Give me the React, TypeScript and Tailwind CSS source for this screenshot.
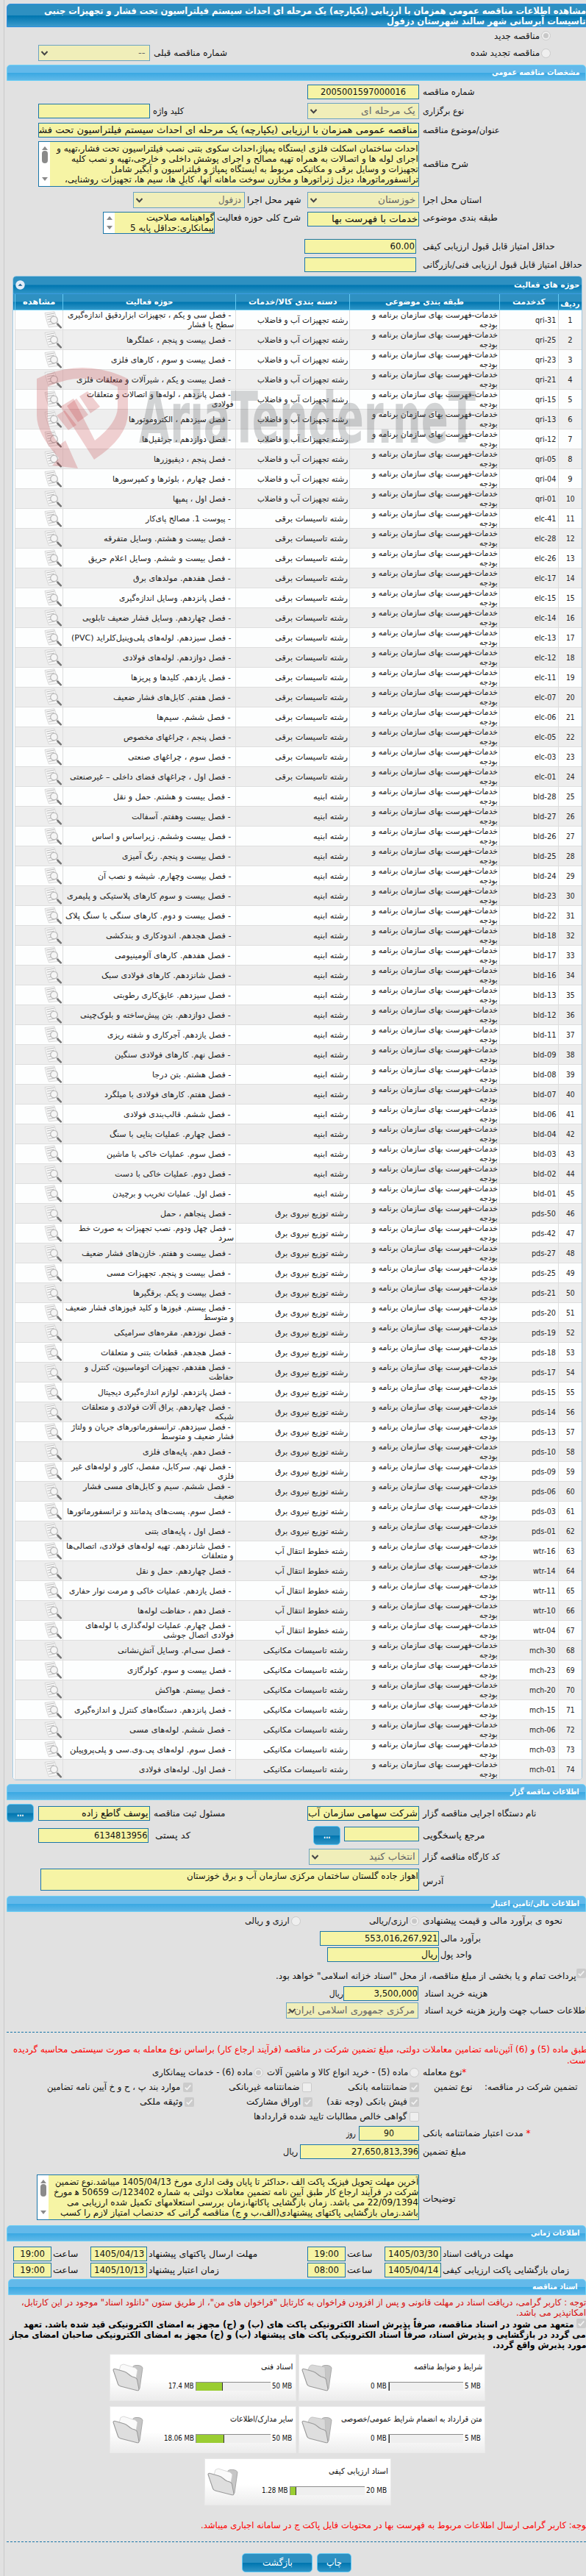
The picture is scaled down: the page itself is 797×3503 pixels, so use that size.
import React, { useLayoutEffect, useRef, useState } from "react";

/* One line of text, condensed or widened to fill its box. */
function T({ c = "", width, ltr, children }: { c?: string; width?: number; ltr?: boolean; children: React.ReactNode }) {
  const box = useRef<HTMLDivElement>(null);
  const ink = useRef<HTMLSpanElement>(null);
  const [k, setK] = useState(1);
  useLayoutEffect(() => {
    if (box.current && ink.current) setK(box.current.clientWidth / ink.current.offsetWidth);
  }, [children, width]);
  return (
    <div ref={box} dir={ltr ? "ltr" : "rtl"} className={`shrink-0 whitespace-nowrap ${c}`} style={width ? { width } : undefined}>
      <span ref={ink} className={`inline-block whitespace-pre ${ltr ? "origin-left" : "origin-right"}`} style={{ transform: `scaleX(${k})` }}>
        {children}
      </span>
    </div>
  );
}

function Section({ w, m = "ml-[9px] pr-[8px]", children }: { w: string; m?: string; children: React.ReactNode }) {
  return (
    <div className={`flex h-[22px] shrink-0 items-center justify-end rounded-t-[5px] border border-[#6fd0f5] bg-[linear-gradient(#63b9ea_0%,#63b9ea_48%,#3aa9e3_52%,#60b8e8_100%)] text-[11px] font-bold text-white ${m}`}>
      <T c={w}>{children}</T>
    </div>
  );
}

/* Horizontal strip of the form; children are laid out left to right. */
function Row({ c, children }: { c: string; children: React.ReactNode }) {
  return <div className={`flex shrink-0 items-center ${c}`}>{children}</div>;
}

function Input({ c, w, m = "mr-[1px]", children }: { c: string; w?: string; m?: string; children?: React.ReactNode }) {
  return (
    <div className={`flex h-[20px] shrink-0 items-center justify-end overflow-hidden border border-[#1b76a9] bg-[#f6f4a5] text-[13px] ${c}`}>
      {children && <T c={`${w} ${m}`}>{children}</T>}
    </div>
  );
}

function Select({ c, w, children }: { c: string; w: string; children: React.ReactNode }) {
  return (
    <div className={`relative flex h-[22px] shrink-0 items-center justify-end overflow-hidden border border-[#6ba3c3] bg-[#f0eeb9] pr-[4px] text-[13px] text-[#666] ${c}`}>
      <svg className="absolute left-[2px] top-[6px]" width="11" height="9" viewBox="0 0 11 9">
        <path d="M1.5 2 5.5 6.2 9.5 2" fill="none" stroke="#444" strokeWidth="2" />
      </svg>
      <T c={w}>{children}</T>
    </div>
  );
}

function Radio({ on, c = "" }: { on?: boolean; c?: string }) {
  return (
    <span className={`flex size-[13px] shrink-0 items-center justify-center rounded-full border border-[#cbcbcb] bg-[#efefef] ${c}`}>
      {on && <span className="size-[7px] rounded-full bg-[#c8c8c8]" />}
    </span>
  );
}

function Check({ on, c = "" }: { on?: boolean; c?: string }) {
  return on ? (
    <svg className={`shrink-0 ${c}`} width="13" height="13" viewBox="0 0 13 13">
      <rect width="13" height="13" rx="2" fill="#cbcbcb" />
      <path d="M2.8 6.8 5.3 9.3 10.3 3.5" fill="none" stroke="#f3f3f3" strokeWidth="1.8" />
    </svg>
  ) : (
    <span className={`size-[13px] shrink-0 rounded-[2px] border border-[#cbcbcb] bg-[#efefef] ${c}`} />
  );
}

function Btn({ c, w, children }: { c: string; w: string; children: React.ReactNode }) {
  return (
    <div className={`flex shrink-0 items-center justify-center rounded-[5px] border border-[#5fc8f5] bg-[linear-gradient(#2e90c1_0%,#2e90c1_48%,#0076b0_52%,#3095c6_100%)] text-white ${c}`}>
      <T c={w}>{children}</T>
    </div>
  );
}

function Scroll({ h }: { h?: boolean }) {
  return (
    <div className={`flex w-[15px] shrink-0 flex-col items-center justify-between bg-white ${h ? "py-[5px]" : "pt-[6px] pb-[7px]"}`}>
      <span className="border-x-[4.5px] border-b-[5px] border-x-transparent border-b-[#8a8a8a]" />
      {!h && <span className="-mt-[19px] h-[17px] w-[8px] rounded-full bg-[#8a8a8a]" />}
      <span className="border-x-[4.5px] border-t-[5px] border-x-transparent border-t-[#8a8a8a]" />
    </div>
  );
}

function Area({ c, h, children }: { c: string; h?: boolean; children: React.ReactNode }) {
  return (
    <div className={`flex shrink-0 overflow-hidden border border-[#1b76a9] bg-[#f6f4a5] text-[12px] leading-[14px] ${c}`}>
      <Scroll h={h} />
      <div className={`flex flex-1 flex-col items-end ${h ? "" : "pt-[2px]"}`}>{children}</div>
    </div>
  );
}

function DocIcon() {
  return (
    <svg width="24" height="24" viewBox="0 0 24 24" className="shrink-0">
      <path d="M1 2.5 14 .8l6.5 19.5-14 1.600C3.500 15 2.600 9 1 2.500Z" fill="#f7f7f7" stroke="#cfcfcf" strokeWidth=".8" />
      <path d="m3 5 11-2M4 8l10-2M4.500 11.500l5-1M5.500 15l4-.8M6.500 18.500l8-1.500" stroke="#bdbdbd" strokeWidth="1.200" fill="none" />
      <circle cx="13.500" cy="12" r="4.800" fill="#f4f4f4" fillOpacity=".85" stroke="#b5b5b5" strokeWidth="1.100" />
      <path d="m17 16.300 1.500 1.500" stroke="#999" strokeWidth="1.500" />
      <path d="m18.500 18 4.300 4.300" stroke="#747474" strokeWidth="2.500" strokeLinecap="round" />
    </svg>
  );
}

function Folder({ full }: { full?: boolean }) {
  return (
    <svg width="42" height="38" viewBox="0 0 42 38" className="shrink-0">
      <path d="M27 6c1-3 3-3.500 5-3.500 4-.3 8 .5 9 3.500l-4 28-2 2.500L26 20Z" fill="#c6c6c6" stroke="#9a9a9a" strokeWidth=".8" />
      {full && <path d="M9 10 11 2.500l4-1.500 16 5 3 3-3 17Z" fill="#fafafa" stroke="#d0d0d0" strokeWidth=".8" />}
      {!full && <path d="M9 10c1-6 3-8 6-8l17 3 1 20Z" fill="#d9d9d9" stroke="#bdbdbd" strokeWidth=".8" />}
      <path d="M1 9c0-1.500 1.500-2 3-1.500l12 3.500c5 1.500 6 5 11 7 4 1 6 2 6.500 4L36 35c-.2 1.800-1 2-2.500 1.700L11 31c-2-.5-3-1.500-3.500-3Z" fill="#dedede" stroke="#9a9a9a" strokeWidth="1.100" />
    </svg>
  );
}

function Card({ c = "", title, tw, total, totW, used, usedW, pct }: { c?: string; title: string; tw: string; total: string; totW: string; used: string; usedW: string; pct: number }) {
  return (
    <div className={`flex h-[64px] w-[254px] shrink-0 border border-[#e9e9e9] bg-[linear-gradient(#fff_55%,#ececec)] text-[11px] leading-[14px] ${c}`}>
      <div className="pt-[12px] pl-[3px]"><Folder full={pct > 0} /></div>
      <div className="flex flex-1 flex-col items-end">
        <T c={`mt-[10px] mr-[3px] ${tw}`}>{title}</T>
        <div className="mt-[12px] mr-[5px] flex items-center" dir="ltr">
          <T ltr c={usedW}>{used}</T>
          <div className="mx-[2px] flex h-[12px] w-[102px] border-t border-l border-[#8e8e8e] bg-[#efefef]">
            <div className="border-r border-[#333] bg-[#9acd32]" style={{ width: `${pct}%` }} />
          </div>
          <T ltr c={totW}>{total}</T>
        </div>
      </div>
    </div>
  );
}

const GROUPS: Record<string, [string, number]> = {
  qri: ["رشته تجهیزات آب و فاضلاب", 123],
  elc: ["رشته تاسیسات برقی", 99],
  bld: ["رشته ابنیه", 47],
  pds: ["رشته توزیع نیروی برق", 99],
  wtr: ["رشته خطوط انتقال آب", 99],
  mch: ["رشته تاسیسات مکانیکی", 115],
};

const ROWS: [string, string, number, string?, number?][] = [
  ["qri-31", "- فصل سی و یکم ، تجهیزات ابزاردقیق اندازه‌گیری", 222, "سطح یا فشار", 62],
  ["qri-25", "- فصل بیست و پنجم ، عملگرها", 142],
  ["qri-23", "- فصل بیست و سوم ، کارهای فلزی", 163],
  ["qri-21", "- فصل بیست و یکم ، شیرآلات و متعلقات فلزی", 210],
  ["qri-15", "- فصل پانزدهم ، لوله‌ها و اتصالات و متعلقات", 196, "فولادی", 30],
  ["qri-13", "- فصل سیزدهم ، الکتروموتورها", 139],
  ["qri-12", "- فصل دوازدهم ، جرثقیل‌ها", 121],
  ["qri-05", "- فصل پنجم ، دیفیوزرها", 105],
  ["qri-04", "- فصل چهارم ، بلوئرها و کمپرسورها", 161],
  ["qri-01", "- فصل اول ، پمپها", 79],
  ["elc-41", "- پیوست 1. مصالح پای‌کار", 116],
  ["elc-28", "- فصل بیست و هشتم. وسایل متفرقه", 173],
  ["elc-26", "- فصل بیست و ششم. وسایل اعلام حریق", 194],
  ["elc-17", "- فصل هفدهم. مولدهای برق", 133],
  ["elc-15", "- فصل پانزدهم. وسایل اندازه‌گیری", 152],
  ["elc-14", "- فصل چهاردهم. وسایل فشار ضعیف تابلویی", 202],
  ["elc-13", "- فصل سیزدهم. لوله‌های پلی‌وینیل‌کلراید (PVC)", 217],
  ["elc-12", "- فصل دوازدهم. لوله‌های فولادی", 147],
  ["elc-11", "- فصل یازدهم. کلیدها و پریزها", 136],
  ["elc-07", "- فصل هفتم. کابل‌های فشار ضعیف", 160],
  ["elc-06", "- فصل ششم. سیم‌ها", 101],
  ["elc-05", "- فصل پنجم ، چراغهای مخصوص", 146],
  ["elc-03", "- فصل سوم ، چراغهای صنعتی", 140],
  ["elc-01", "- فصل اول ، چراغهای فضای داخلی – غیرصنعتی", 219],
  ["bld-28", "- فصل بیست و هشتم. حمل و نقل", 160],
  ["bld-27", "- فصل بیست وهفتم. آسفالت", 135],
  ["bld-26", "- فصل بیست وششم. زیراساس و اساس", 189],
  ["bld-25", "- فصل بیست و پنجم. رنگ آمیزی", 148],
  ["bld-24", "- فصل بیست وچهارم. شیشه و نصب آن", 181],
  ["bld-23", "- فصل بیست و سوم کارهای پلاستیکی و پلیمری", 223],
  ["bld-22", "- فصل بیست و دوم. کارهای سنگی با سنگ پلاک", 225],
  ["bld-18", "- فصل هجدهم. اندودکاری و بندکشی", 170],
  ["bld-17", "- فصل هفدهم. کارهای آلومینیومی", 158],
  ["bld-16", "- فصل شانزدهم. کارهای فولادی سبک", 176],
  ["bld-13", "- فصل سیزدهم. عایق‌کاری رطوبتی", 160],
  ["bld-12", "- فصل دوازدهم. بتن پیش‌ساخته و بلوک‌چینی", 205],
  ["bld-11", "- فصل یازدهم. آجرکاری و شفته ریزی", 168],
  ["bld-09", "- فصل نهم. کارهای فولادی سنگین", 158],
  ["bld-08", "- فصل هشتم. بتن درجا", 107],
  ["bld-07", "- فصل هفتم. کارهای فولادی با میلگرد", 172],
  ["bld-06", "- فصل ششم. قالب‌بندی فولادی", 146],
  ["bld-04", "- فصل چهارم. عملیات بنایی با سنگ", 165],
  ["bld-03", "- فصل سوم. عملیات خاکی با ماشین", 169],
  ["bld-02", "- فصل دوم. عملیات خاکی با دست", 158],
  ["bld-01", "- فصل اول. عملیات تخریب و برچیدن", 161],
  ["pds-50", "- فصل پنجاهم ، حمل", 96],
  ["pds-42", "- فصل چهل ودوم. نصب تجهیزات به صورت خط", 207, "سرد", 21],
  ["pds-27", "- فصل بیست و هفتم. خازن‌های فشار ضعیف", 203],
  ["pds-25", "- فصل بیست و پنجم. تجهیزات مسی", 169],
  ["pds-21", "- فصل بیست و یکم. برقگیرها", 133],
  ["pds-20", "- فصل بیستم. فیوزها و کلید فیوزهای فشار ضعیف", 225, "و متوسط", 41],
  ["pds-19", "- فصل نوزدهم. مقره‌های سرامیکی", 159],
  ["pds-18", "- فصل هجدهم. قطعات بتنی و متعلقات", 177],
  ["pds-17", "- فصل هفدهم. تجهیزات اتوماسیون، کنترل و", 199, "حفاظت", 34],
  ["pds-15", "- فصل پانزدهم. لوازم اندازه‌گیری دیجیتال", 181],
  ["pds-14", "- فصل چهاردهم. یراق آلات فولادی و متعلقات", 203, "شبکه", 26],
  ["pds-13", "- فصل سیزدهم. ترانسفورماتورهای جریان و ولتاژ", 217, "فشار ضعیف و متوسط", 99],
  ["pds-10", "- فصل دهم. پایه‌های فلزی", 120],
  ["pds-09", "- فصل نهم. سرکابل، مفصل، کاور و لوله‌های غیر", 217, "فلزی", 22],
  ["pds-06", "- فصل ششم. سیم و کابل‌های مسی فشار", 201, "ضعیف", 27],
  ["pds-03", "- فصل سوم. پست‌های پدمانتد و ترانسفورماتورها", 223],
  ["pds-01", "- فصل اول ، پایه‌های بتنی", 117],
  ["wtr-16", "- فصل شانزدهم. تهیه لوله‌های فولادی، اتصالی‌ها", 224, "و متعلقات", 44],
  ["wtr-14", "- فصل چهاردهم. حمل و نقل", 129],
  ["wtr-11", "- فصل یازدهم. عملیات خاکی و مرمت نوار حفاری", 220],
  ["wtr-10", "- فصل دهم ، حفاظت لوله‌ها", 127],
  ["wtr-04", "- فصل چهارم. عملیات لوله‌گذاری با لوله‌های", 198, "فولادی اتصال جوشی", 96],
  ["mch-30", "- فصل سی‌ام. وسایل آتش‌نشانی", 154],
  ["mch-23", "- فصل بیست و سوم. کولرگازی", 141],
  ["mch-20", "- فصل بیستم. هواکش", 103],
  ["mch-15", "- فصل پانزدهم. دستگاه‌های کنترل و اندازه‌گیری", 213],
  ["mch-06", "- فصل ششم. لوله‌های مسی", 138],
  ["mch-03", "- فصل سوم. لوله‌های پی‌.وی‌.سی و پلی‌پروپیلن", 219],
  ["mch-01", "- فصل اول. لوله‌های فولادی", 125],
];

const COLS = "grid grid-cols-[2px_65px_235px_155px_204px_80px_1fr]";
const TH = "flex items-center justify-center border-l border-[#62c9f3]";
const TD = "flex flex-col items-end justify-center border-l border-[#dedede]";

function ActivityTable() {
  return (
    <div className="mt-[5px] ml-[17px] h-[2046px] w-[775px] shrink-0 overflow-hidden rounded-[5px] border border-[#a0c9e3] bg-[#fdfefe] text-[11px] leading-[13px] text-[#222]">
      <div className="flex h-[23px] items-center justify-between bg-[linear-gradient(#2e90c1_0%,#2e90c1_48%,#0076b0_52%,#3095c6_100%)] pr-[3px] pl-[3px] font-bold text-white">
        <svg width="13" height="13" viewBox="0 0 13 13">
          <circle cx="6.500" cy="6.500" r="6.200" fill="#e3edf8" />
          <path d="m3.500 7.800 3-3 3 3Z" fill="#17608f" />
        </svg>
        <T c="w-[89px]">حوزه های فعالیت</T>
      </div>
      <div className={`${COLS} h-[23px] border-y border-t-[#3a9be0] border-b-[#62c9f3] bg-[linear-gradient(#2e90c1_0%,#2e90c1_48%,#0076b0_52%,#3095c6_100%)] font-bold text-white`}>
        <div />
        <div className={TH}><T c="w-[44px]">مشاهده</T></div>
        <div className={TH}><T c="w-[64px]">حوزه فعالیت</T></div>
        <div className={TH}><T c="w-[120px]">دسته بندی کالا/خدمات</T></div>
        <div className={TH}><T c="w-[107px]">طبقه بندی موضوعی</T></div>
        <div className={TH}><T c="w-[45px]">کدخدمت</T></div>
        <div className={`${TH} pt-[6px]`}><T c="w-[26px]">ردیف</T></div>
      </div>
      {ROWS.map(([code, a, aw, b, bw], i) => {
        const [group, gw] = GROUPS[code.slice(0, 3)];
        return (
          <div key={code} className={`${COLS} h-[27px]`}>
            <div className="bg-white" />
            <div className={`col-span-6 grid grid-cols-[65px_235px_155px_204px_80px_1fr] border-b border-[#dedede] ${i % 2 ? "bg-[#eeeeee]" : "bg-[#fdfefe]"}`}>
              <div className={`${TD} pr-[1px]`}><DocIcon /></div>
              <div className={`${TD} pr-[2px]`}>
                <T c="mr-[4px]" width={aw}>{a}</T>
                {b && <T width={bw}>{b}</T>}
              </div>
              <div className={`${TD} pr-[2px]`}><T width={gw}>{group}</T></div>
              <div className={`${TD} pr-[2px]`}>
                <T c="w-[171px]">خدمات-فهرست بهای سازمان برنامه و</T>
                <T c="w-[25px]">بودجه</T>
              </div>
              <div className={`${TD} pr-[3px]`}><T ltr width={code.startsWith("mch") ? 36 : code.startsWith("pds") ? 33 : code.startsWith("elc") ? 29 : code.startsWith("qri") ? 28 : 31}>{code}</T></div>
              <div className={`${TD} items-center!`}><T width={i < 9 ? 6 : 12}>{i + 1}</T></div>
            </div>
          </div>
        );
      })}
    </div>
  );
}

function Watermark() {
  return (
    <svg className="pointer-events-none absolute top-[495px] left-[45px]" width="610" height="150" viewBox="0 0 610 150">
      <g fill="#c0272d" fillOpacity=".22">
        <path fillRule="evenodd" d="M5 20Q67-10 129 20V66Q129 100 83 130L37 58 55 47 84 104Q115 80 115 58V31Q67 8 20 31V74Q21 92 36 110L44 104 61 142 26 138 35 128Q5 95 5 70Z" />
        <path d="m32 70 11-7 16 20-11 7ZM46 57l13-10 16 22-14 10ZM63 44l11-7 17 21-13 9Z" />
      </g>
      <g fill="#55585c" fillOpacity=".25" fontFamily="'DejaVu Sans Condensed',sans-serif" fontWeight="bold">
        <text x="144" y="107" fontSize="96" textLength="458" lengthAdjust="spacingAndGlyphs">AriaTender.neT</text>
      </g>
    </svg>
  );
}

export default function App() {
  return (
    <div className="relative h-[3503px] w-[797px] overflow-hidden bg-[#e1e1e1] font-['DejaVu_Sans_Condensed','DejaVu_Sans',sans-serif] text-[12px] leading-[14px] text-[#111]">
      <div className="ml-[5px] flex h-[3503px] w-[792px] flex-col border-l border-[#c9c9c9]">
        <div className="-ml-[6px] flex h-[3503px] w-[797px] flex-col">
          <div className="mt-[5px] ml-[9px] flex h-[32px] w-[792px] shrink-0 flex-col items-end rounded-t-[5px] border border-[#2f8fe0] bg-[linear-gradient(#2e90c1_0%,#2e90c1_48%,#0076b0_52%,#3d9bcc_100%)] pt-[2px] pr-[3px] text-[13px] leading-[14px] font-bold text-white">
            <T c="w-[737px]">مشاهده اطلاعات مناقصه عمومی همزمان با ارزیابی (یکپارچه) یک مرحله ای احداث سیستم فیلتراسیون تحت فشار و تجهیزات جنبی</T>
            <T c="w-[271px]">تاسیسات آبرسانی شهر سالند شهرستان دزفول</T>
          </div>
          <Row c="h-[23px]"><T c="ml-[672px] w-[62px]">مناقصه جدید</T><Radio on c="ml-[2px]" /></Row>
          <Row c="mt-[1px] h-[22px]">
            <Select c="ml-[52px] w-[152px]" w="w-[9px] mr-[2px]">--</Select>
            <T c="ml-[5px] w-[100px]">شماره مناقصه قبلی</T>
            <T c="ml-[331px] w-[94px]">مناقصه تجدید شده</T>
            <Radio c="ml-[2px]" />
          </Row>
          <div className="mt-[5px] shrink-0"><Section w="w-[120px]">مشخصات مناقصه عمومی</Section></div>
          <Row c="mt-[5px] h-[20px]"><Input c="ml-[418px] w-[152px]" w="w-[116px]" m="mr-[17px]">2005001597000016</Input><T c="ml-[5px] w-[71px]">شماره مناقصه</T></Row>
          <Row c="mt-[5px] h-[22px]">
            <Input c="ml-[52px] w-[152px]" /><T c="ml-[4px] w-[42px]">کلید واژه</T>
            <Select c="ml-[168px] w-[152px]" w="w-[74px]">یک مرحله ای</Select><T c="ml-[5px] w-[56px]">نوع برگزاری</T>
          </Row>
          <Row c="mt-[5px] h-[20px]">
            <Input c="ml-[52px] w-[518px]" w="w-[519px]">مناقصه عمومی همزمان با ارزیابی (یکپارچه) یک مرحله ای احداث سیستم فیلتراسیون تحت فشا</Input>
            <T c="ml-[5px] w-[104px]">عنوان/موضوع مناقصه</T>
          </Row>
          <Row c="mt-[5px] h-[62px]">
            <Area c="ml-[52px] h-[62px] w-[518px]">
              <T c="w-[492px]">احداث ساختمان اسکلت فلزی ایستگاه پمپاژ،احداث سکوی بتنی نصب فیلتراسیون تحت فشار،تهیه و</T>
              <T c="w-[472px]">اجرای لوله ها و اتصالات به همراه تهیه مصالح و اجرای پوشش داخلی و خارجی،تهیه و نصب کلیه</T>
              <T c="w-[418px]">تجهیزات و وسایل برقی و مکانیکی مربوط به ایستگاه پمپاژ و فیلتراسیون و آبگیر شامل</T>
              <T c="w-[481px]">ترانسفورماتورها، دیزل ژنراتورها و مخازن سوخت ماهانه آنها، کابل ها، سیم ها، تجهیزات روشنایی،</T>
              <T c="w-[468px]">سیستم اتصال زمین، تابلوهای برق و کنترل، لوله کشی و شیرآلات و تجهیزات ابزار دقیق و</T>
            </Area>
            <T c="ml-[5px] w-[62px]">شرح مناقصه</T>
          </Row>
          <Row c="mt-[7px] h-[22px]">
            <Select c="ml-[181px] w-[152px]" w="w-[31px]">دزفول</Select><T c="ml-[3px] w-[73px]">شهر محل اجرا</T>
            <Select c="ml-[9px] w-[152px]" w="w-[51px]">خوزستان</Select><T c="ml-[5px] w-[80px]">استان محل اجرا</T>
          </Row>
          <Row c="mt-[5px] h-[30px] items-start!">
            <Area h c="ml-[140px] h-[30px] w-[152px]">
              <T c="w-[92px]">گواهینامه صلاحیت</T><T c="w-[114px]">پیمانکاری:حداقل پایه 5</T>
            </Area>
            <T c="mt-[1px] ml-[3px] w-[114px]">شرح کلی حوزه فعالیت</T>
            <Input c="ml-[9px] w-[152px]" w="w-[117px]">خدمات با فهرست بها</Input>
            <T c="mt-[1px] ml-[5px] w-[102px]">طبقه بندی موضوعی</T>
          </Row>
          <Row c="mt-[7px] h-[20px]"><Input c="ml-[414px] w-[152px]" w="w-[33px]">60.00</Input><T c="ml-[9px] w-[180px]">حداقل امتیاز قابل قبول ارزیابی کیفی</T></Row>
          <Row c="mt-[5px] h-[20px]"><Input c="ml-[414px] w-[152px]" /><T c="ml-[9px] w-[217px]">حداقل امتیاز قابل قبول ارزیابی فنی/بازرگانی</T></Row>

          <ActivityTable />

          <div className="mt-[5px] shrink-0"><Section w="w-[94px]">اطلاعات مناقصه گزار</Section></div>
          <Row c="mt-[5px] h-[25px]">
            <Btn c="ml-[9px] h-[25px] w-[37px]" w="w-[9px] font-bold">...</Btn>
            <Input c="ml-[6px] w-[152px]" w="w-[91px]">یوسف گاطع زاده</Input><T c="ml-[5px] w-[97px]">مسئول ثبت مناقصه</T>
            <Input c="ml-[112px] w-[152px]" w="w-[149px]">شرکت سهامی سازمان آب</Input><T c="ml-[5px] w-[154px]">نام دستگاه اجرایی مناقصه گزار</T>
          </Row>
          <Row c="mt-[5px] h-[26px]">
            <Input c="ml-[52px] w-[150px]" w="w-[72px]">6134813956</Input><T c="ml-[9px] w-[48px]">کد پستی</T>
            <Btn c="ml-[167px] h-[26px] w-[37px]" w="w-[9px] font-bold">...</Btn>
            <Input c="mb-[4px] ml-[5px] w-[102px]" /><T c="ml-[5px] w-[84px]">مرجع پاسخگویی</T>
          </Row>
          <Row c="mt-[5px] h-[22px]"><Select c="ml-[420px] w-[150px]" w="w-[63px]">انتخاب کنید</Select><T c="ml-[5px] w-[105px]">کد کارگاه مناقصه گزار</T></Row>
          <Row c="mt-[5px] h-[30px]">
            <div className="ml-[55px] flex h-[30px] w-[515px] shrink-0 justify-end border border-[#1b76a9] bg-[#f6f4a5] pt-[2px]"><T c="w-[315px]">اهواز جاده گلستان ساختمان مرکزی سازمان آب و برق خوزستان</T></div>
            <T c="mt-[4px] ml-[5px] w-[28px]">آدرس</T>
          </Row>
          <div className="mt-[7px] shrink-0"><Section w="w-[120px]">اطلاعات مالی/تامین اعتبار</Section></div>
          <Row c="h-[24px]">
            <T c="ml-[333px] w-[61px]">ارزی و ریالی</T><Radio c="ml-[2px]" />
            <T c="ml-[93px] w-[53px]">ارزی/ریالی</T><Radio on c="ml-[2px]" /><T c="ml-[5px] w-[190px]">نحوه ی برآورد مالی و قیمت پیشنهادی</T>
          </Row>
          <Row c="mt-[2px] h-[20px]"><Input c="ml-[435px] w-[162px]" w="w-[99px]">553,016,267,921</Input><T c="ml-[2px] w-[55px]">برآورد مالی</T></Row>
          <Row c="mt-[2px] h-[20px]"><Input c="ml-[445px] w-[152px]" w="w-[22px]">ریال</Input><T c="ml-[2px] w-[42px]">واحد پول</T></Row>
          <Row c="mt-[9px] h-[20px]"><T c="ml-[375px] w-[409px]">پرداخت تمام و یا بخشی از مبلغ مناقصه، از محل "اسناد خزانه اسلامی" خواهد بود.</T><Check on c="mb-[7px]" /></Row>
          <Row c="mt-[4px] h-[20px]"><T c="ml-[448px] w-[19px]">ریال</T><Input c="w-[102px]" w="w-[60px]" m="">3,500,000</Input><T c="ml-[8px] w-[86px]">هزینه خرید اسناد</T></Row>
          <Row c="mt-[2px] h-[22px]"><Select c="ml-[389px] w-[180px]" w="w-[174px]">مرکزی جمهوری اسلامی ایران د</Select><T c="ml-[8px] w-[222px]">اطلاعات حساب جهت واریز هزینه خرید اسناد</T></Row>

          <div className="mt-[18px] ml-[9px] shrink-0 border-t border-dashed border-[#1b76a9]" />
          <div className="mt-[16px] -mr-[3px] flex h-[29px] shrink-0 flex-col items-end text-[#f00]">
            <T c="w-[782px]">طبق ماده (5) و (6) آئین‌نامه تضامین معاملات دولتی، مبلغ تضمین شرکت در مناقصه (فرآیند ارجاع کار) براساس نوع معامله به صورت سیستمی محاسبه گردیده</T>
            <T c="mt-[1px] w-[29px]">است.</T>
          </div>
          <Row c="-mt-[1px] h-[20px]">
            <T c="ml-[207px] w-[137px]">ماده (6) - خدمات پیمانکاری</T><Radio on c="ml-[1px]" />
            <T c="ml-[5px] w-[192px]">ماده (5) - خرید انواع کالا و ماشین آلات</T><Radio c="ml-[2px]" />
            <T c="ml-[5px] w-[59px]"><span className="text-[#f00]">*</span>نوع معامله</T>
          </Row>
          <Row c="h-[20px]">
            <T c="ml-[64px] w-[181px]">موارد بند پ ، ح و خ آیین نامه تضامین</T><Check on c="ml-[4px]" />
            <T c="ml-[49px] w-[97px]">ضمانتنامه غیربانکی</T><Check c="ml-[3px]" />
            <T c="ml-[49px] w-[81px]">ضمانتنامه بانکی</T><Check on c="ml-[3px]" />
            <T c="ml-[20px] w-[53px]">نوع تضمین</T><T c="ml-[16px] w-[126px]">تضمین شرکت در مناقصه:</T>
          </Row>
          <Row c="h-[20px]">
            <T c="ml-[190px] w-[58px]">وثیقه ملکی</T><Check on c="ml-[3px]" />
            <T c="ml-[71px] w-[74px]">اوراق مشارکت</T><Check on c="ml-[3px]" />
            <T c="ml-[19px] w-[110px]">فیش بانکی (وجه نقد)</T><Check on c="ml-[3px]" />
          </Row>
          <Row c="h-[20px]"><T c="ml-[345px] w-[208px]">گواهی خالص مطالبات تایید شده قراردادها</T><Check c="ml-[4px]" /></Row>
          <Row c="mt-[3px] h-[20px]">
            <T c="ml-[471px] w-[13px]">روز</T><Input c="ml-[4px] w-[82px]" w="w-[14px]" m="mr-[33px]">90</Input>
            <T c="ml-[5px] w-[147px]"><span className="text-[#f00]">* </span>مدت اعتبار ضمانتنامه بانکی</T>
          </Row>
          <Row c="mt-[5px] h-[20px]"><T c="ml-[385px] w-[20px]">ریال</T><Input c="ml-[3px] w-[162px]" w="w-[91px]" m="">27,650,813,396</Input><T c="ml-[5px] w-[59px]">مبلغ تضمین</T></Row>
          <Row c="mt-[21px] h-[62px]">
            <Area c="ml-[50px] h-[62px] w-[520px]">
              <T c="w-[494px]">آخرین مهلت تحویل فیزیک پاکت الف ،حداکثر تا پایان وقت اداری مورخ 1405/04/13 میباشد.نوع تضمین</T>
              <T c="w-[496px]">شرکت در فرآیند ارجاع کار طبق آیین نامه تضمین معاملات دولتی به شماره 123402/ت 50659 ه‍ مورخ</T>
              <T c="w-[478px]">22/09/1394 می باشد. زمان بازگشایی پاکاتها،زمان بررسی استعلامهای تکمیل شده ارزیابی می</T>
              <T c="w-[487px]">باشد.زمان بازگشایی پاکتهای پیشنهادی(الف،ب و ج) مناقصه گرانی که حدنصاب امتیاز لازم را کسب</T>
              <T c="w-[453px]">نمایند ساعت 10:00 مورخ 1405/04/21 و زمان بازگشایی پاکت ساعت 10:00 مورخ 1405/04/23</T>
            </Area>
            <T c="mt-[4px] ml-[5px] w-[44px]">توضیحات</T>
          </Row>
          <div className="mt-[7px] shrink-0"><Section w="w-[66px]">اطلاعات زمانی</Section></div>
          <Row c="mt-[7px] h-[20px]">
            <Input c="ml-[18px] w-[52px]" w="w-[34px]" m="mr-[8px]">19:00</Input><T c="ml-[2px] w-[34px]">ساعت</T>
            <Input c="ml-[17px] w-[77px]" w="w-[68px]" m="mr-[3px]">1405/04/13</Input><T c="ml-[2px] w-[148px]">مهلت ارسال پاکتهای پیشنهاد</T>
            <Input c="ml-[68px] w-[52px]" w="w-[34px]" m="mr-[8px]">19:00</Input><T c="ml-[2px] w-[34px]">ساعت</T>
            <Input c="ml-[17px] w-[77px]" w="w-[68px]" m="mr-[3px]">1405/03/30</Input><T c="ml-[2px] w-[96px]">مهلت دریافت اسناد</T>
          </Row>
          <Row c="mt-[2px] h-[20px]">
            <Input c="ml-[18px] w-[52px]" w="w-[34px]" m="mr-[8px]">19:00</Input><T c="ml-[2px] w-[34px]">ساعت</T>
            <Input c="ml-[17px] w-[77px]" w="w-[68px]" m="mr-[3px]">1405/10/13</Input><T c="ml-[2px] w-[96px]">زمان اعتبار پیشنهاد</T>
            <Input c="ml-[120px] w-[52px]" w="w-[34px]" m="mr-[8px]">08:00</Input><T c="ml-[2px] w-[34px]">ساعت</T>
            <Input c="ml-[17px] w-[77px]" w="w-[68px]" m="mr-[3px]">1405/04/14</Input><T c="ml-[2px] w-[172px]">زمان بازگشایی پاکت ارزیابی کیفی</T>
          </Row>
          <div className="mt-[2px] shrink-0"><Section m="ml-[11px] pr-[10px]" w="w-[62px]">اسناد مناقصه</Section></div>
          <div className="mt-[3px] flex h-[30px] shrink-0 flex-col items-end text-[#d90a0a]">
            <T c="w-[768px]">توجه : کاربر گرامی، دریافت اسناد در مهلت قانونی و پس از افزودن فراخوان به کارتابل "فراخوان های من"، از طریق ستون "دانلود اسناد" موجود در این کارتابل،</T>
            <T c="w-[95px]">امکانپذیر می باشد.</T>
          </div>
          <div className="flex h-[43px] shrink-0 flex-col items-end text-[12px] font-bold text-black">
            <div className="flex items-start"><T c="mr-[3px] w-[749px]">متعهد می شود در اسناد مناقصه، صرفاً پذیرش اسناد الکترونیکی پاکت های (ب) و (ج) مجهز به امضای الکترونیکی قید شده باشد. تعهد</T><Check on c="-mt-[1px]" /></div>
            <T c="w-[784px]">می گردد در بازگشایی و پذیرش اسناد، صرفاً اسناد الکترونیکی پاکت های پیشنهاد (ب) و (ج) مجهز به امضای الکترونیکی صاحبان امضای مجاز</T>
            <T c="w-[127px]">مورد پذیرش واقع گردد.</T>
          </div>
          <Row c="mt-[4px]">
            <Card c="ml-[149px]" title="اسناد فنی" tw="w-[44px]" total="50 MB" totW="w-[27px]" used="17.4 MB" usedW="w-[35px]" pct={36} />
            <Card c="ml-[3px]" title="شرایط و ضوابط مناقصه" tw="w-[93px]" total="5 MB" totW="w-[22px]" used="0 MB" usedW="w-[22px]" pct={0} />
          </Row>
          <Row c="mt-[7px]">
            <Card c="ml-[149px]" title="سایر مدارک/اطلاعات" tw="w-[86px]" total="50 MB" totW="w-[27px]" used="18.06 MB" usedW="w-[41px]" pct={38} />
            <Card c="ml-[3px]" title="متن قرارداد به انضمام شرایط عمومی/خصوصی" tw="w-[192px]" total="5 MB" totW="w-[22px]" used="0 MB" usedW="w-[22px]" pct={0} />
          </Row>
          <Row c="mt-[7px]"><Card c="ml-[278px]" title="اسناد ارزیابی کیفی" tw="w-[81px]" total="20 MB" totW="w-[28px]" used="1.28 MB" usedW="w-[36px]" pct={8} /></Row>
          <div className="mt-[20px] -mr-[3px] flex shrink-0 justify-end text-[#f00]"><T c="w-[527px]">توجه: کاربر گرامی ارسال اطلاعات مربوط به فهرست بها در محتویات فایل پاکت ج در سامانه اجباری میباشد.</T></div>
          <div className="mt-[15px] ml-[9px] shrink-0 border-t border-dashed border-[#1b76a9]" />
          <Row c="mt-[15px] text-[13px]"><Btn c="ml-[329px] h-[26px] w-[96px]" w="w-[41px]">بازگشت</Btn><Btn c="ml-[6px] h-[26px] w-[47px]" w="w-[21px]">چاپ</Btn></Row>
        </div>
      </div>
      <Watermark />
    </div>
  );
}
